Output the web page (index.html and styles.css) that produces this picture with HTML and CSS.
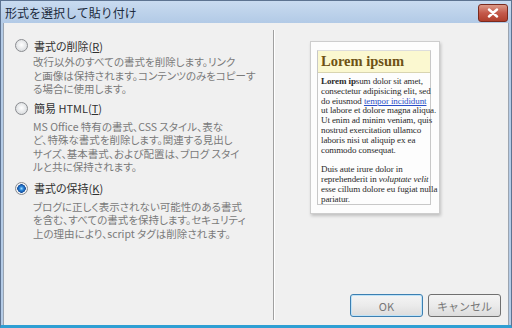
FILE: index.html
```html
<!DOCTYPE html>
<html lang="ja">
<head>
  <meta charset="UTF-8" />
  <title>形式を選択して貼り付け</title>
  <link rel="stylesheet" href="styles.css">
</head>
<body>
  <div class="window">
    <div class="titlebar">
      <span class="title">形式を選択して貼り付け</span>
      <button class="close" aria-label="閉じる">
        <svg width="12" height="10" viewBox="0 0 12 10"><path d="M2 1.5 L10 8.5 M10 1.5 L2 8.5" stroke="#fff" stroke-width="2.4" stroke-linecap="round"/></svg>
      </button>
    </div>
    <div class="client">
      <!-- Paste options -->
      <div class="options">
        <div class="option">
          <div class="opt-head"><span class="radio"></span><span class="label">書式の削除(<u>R</u>)</span></div>
          <p class="desc">改行以外のすべての書式を削除します。リンク<br>と画像は保持されます。コンテンツのみをコピーす<br>る場合に使用します。</p>
        </div>
        <div class="option">
          <div class="opt-head"><span class="radio"></span><span class="label">簡易 HTML(<u>T</u>)</span></div>
          <p class="desc">MS Office 特有の書式、CSS スタイル、表な<br>ど、特殊な書式を削除します。関連する見出し<br>サイズ、基本書式、および配置は、ブログ スタイ<br>ルと共に保持されます。</p>
        </div>
        <div class="option">
          <div class="opt-head"><span class="radio checked"></span><span class="label">書式の保持(<u>K</u>)</span></div>
          <p class="desc">ブログに正しく表示されない可能性のある書式<br>を含む、すべての書式を保持します。セキュリティ<br>上の理由により、script タグは削除されます。</p>
        </div>
      </div>
      <div class="sep"></div>
      <!-- Preview + buttons -->
      <div class="side">
        <div class="card">
          <div class="sample">
            <div class="sample-head">Lorem ipsum</div>
            <div class="sample-body">
              <p><b>Lorem ip</b>sum dolor sit amet,<br>consectetur adipisicing elit, sed<br>do eiusmod <a href="#">tempor incididunt</a><br>ut labore et dolore magna aliqua.<br>Ut enim ad minim veniam, quis<br>nostrud exercitation ullamco<br>laboris nisi ut aliquip ex ea<br>commodo consequat.</p>
              <p>Duis aute irure dolor in<br>reprehenderit in <i>voluptate velit</i><br>esse cillum dolore eu fugiat nulla<br>pariatur.</p>
            </div>
          </div>
        </div>
        <div class="buttons">
          <button class="btn default">OK</button>
          <button class="btn">キャンセル</button>
        </div>
      </div>
    </div>
  </div>
</body>
</html>
```

FILE: styles.css
```css
body { margin: 0; font-family: "Noto Sans CJK JP", "Noto Sans", sans-serif; }
.window { width: 512px; height: 328px; box-sizing: border-box; display: flex; flex-direction: column; background: #b4cbe6; border: 1px solid #5d7391; border-bottom: 3px solid #2f9fd3; }
.titlebar { height: 22px; display: flex; align-items: center; justify-content: space-between; padding: 0 3px 0 4px; background: linear-gradient(#c9dbf0, #b2cae6); }
.title { font-size: 12px; color: #1b2a3c; }
.close { width: 30px; height: 18px; margin-top: 1px; border: 1px solid #7a2a1e; border-radius: 3px; padding: 0; display: flex; align-items: center; justify-content: center; background: linear-gradient(#dc9a88, #c4594a 50%, #b03f2c); }
.client { flex: 1; display: flex; margin: 0 2px; background: #f0f0f0; border-left: 1px solid #9aa4b0; border-right: 1px solid #9aa4b0; }
/* options column */
.options { width: 258px; padding: 16px 0 0 11px; }
.option { margin-bottom: 6px; }
.opt-head { display: flex; align-items: center; height: 13px; }
.radio { width: 11px; height: 11px; border: 1px solid #8a8c90; border-radius: 50%; background: radial-gradient(circle at 50% 45%, #fff, #e2e4e6 60%, #cfd2d5); margin-right: 6px; box-sizing: content-box; }
.radio.checked { background: radial-gradient(circle at 50% 50%, #9fdcff 0, #2a84d8 2px, #174f9c 4px, #f4f6f8 4.5px, #dde0e4); }
.label { font-size: 11px; color: #303030; font-feature-settings: "palt"; }
.desc { margin: 3px 0 0 18px; font-size: 10.5px; line-height: 13.5px; color: #7a7a7a; font-feature-settings: "palt"; white-space: nowrap; }
.option:nth-child(2) .desc { margin-top: 5px; }
.option:nth-child(3) .desc { margin-top: 5px; }
.option:nth-child(2) { margin-bottom: 8px; }
.sep { width: 1px; margin: 7px 0 5px; background: #a0a0a0; border-right: 1px solid #fff; }
/* preview column */
.side { flex: 1; display: flex; flex-direction: column; padding: 18px 7px 8px 35px; }
.card { width: 114px; height: 155px; padding: 8px 8px 8px 6px; background: #fdfdfd; border: 1px solid #cdcdcd; box-shadow: 1px 2px 3px rgba(0,0,0,0.2); }
.sample { height: 100%; box-sizing: border-box; border: 1px solid #c8c8c8; border-top-color: #ddd; }
.sample-head { height: 21px; padding-left: 3px; display: flex; align-items: center; background: #fbf8d0; border-bottom: 1px solid #d8d4b0; font-family: "Liberation Serif", serif; font-weight: bold; font-size: 14.5px; color: #6e5214; }
.sample-body { padding: 4px 2px 0 3px; font-family: "Liberation Serif", serif; font-size: 9px; line-height: 9.8px; color: #2a2a2a; white-space: nowrap; letter-spacing: -0.1px; }
.sample-body p { margin: 0 0 9.8px; }
.sample-body a { color: #2b4fc8; }
.buttons { margin-top: auto; display: flex; justify-content: flex-end; gap: 5px; }
.btn { width: 73px; height: 23px; font-family: "Noto Sans CJK JP", sans-serif; font-size: 11px; color: #777; border: 1px solid #707070; border-radius: 3px; background: linear-gradient(#f4f4f4, #ebebeb 50%, #dcdcdc); }
.btn.default { border-color: #3c7fb1; box-shadow: inset 0 0 0 1px #bfe3f8; }
```
